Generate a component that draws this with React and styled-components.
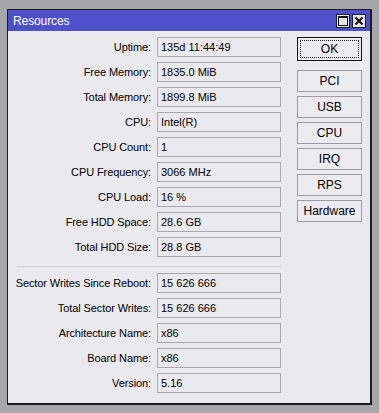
import React from "react";
import styled, { createGlobalStyle } from "styled-components";

const Global = createGlobalStyle`
  html, body { margin: 0; padding: 0; background: #a7a6ab; }
  body { font-family: "Liberation Sans", Arial, sans-serif; font-size: 11px; color: #000; }
`;

const Page = styled.div`
  padding: 9px 0 0 7px;
`;

const Window = styled.div`
  width: 365px;
  box-sizing: border-box;
  border: 1px solid #1c1c1c;
  border-right-width: 2px;
  border-bottom-width: 2px;
  background: #eae9ee;
`;

const TitleBar = styled.div`
  height: 21px;
  background: #4e50c9;
  display: flex;
  align-items: center;
  justify-content: space-between;
  padding: 0 4px 0 5px;
  color: #fff;
  font-size: 12px;
`;

const TitleText = styled.span`
  letter-spacing: -0.1px;
`;

const TitleButtons = styled.div`
  display: flex;
  gap: 2px;
`;

const TitleButton = styled.div`
  width: 14px;
  height: 14px;
  box-sizing: border-box;
  border: 1px solid #1e1e1e;
  background: #e4e3e8;
  display: flex;
  align-items: center;
  justify-content: center;
`;

const Body = styled.div`
  display: flex;
  padding: 6px 8px 10px 0;
  gap: 16px;
  align-items: flex-start;
`;

const Form = styled.div`
  display: grid;
  grid-template-columns: 143px 124px;
  column-gap: 6px;
  row-gap: 5px;
`;

const Label = styled.div`
  text-align: right;
  line-height: 20px;
  white-space: nowrap;
  letter-spacing: -0.1px;
`;

const Field = styled.div`
  height: 20px;
  box-sizing: border-box;
  border: 1px solid #a9a8ad;
  padding-left: 3px;
  line-height: 18px;
  white-space: nowrap;
  overflow: hidden;
`;

const Separator = styled.div`
  grid-column: 1 / span 2;
  height: 1px;
  margin: 4px 0 1px 9px;
  background: #cfced3;
`;

const Buttons = styled.div`
  display: flex;
  flex-direction: column;
  width: 65px;
  gap: 4px;
`;

const Button = styled.div`
  height: ${(p) => (p.$default ? 24 : 22)}px;
  box-sizing: border-box;
  border: 1px solid ${(p) => (p.$default ? "#111" : "#9d9ca1")};
  background: #ecebf0;
  display: flex;
  align-items: center;
  justify-content: center;
  margin-bottom: ${(p) => (p.$default ? 5 : 0)}px;
  font-size: 12px;
  padding: ${(p) => (p.$default ? "2px" : "0")};
`;

const Focus = styled.div`
  flex: 1;
  align-self: stretch;
  border: 1px dotted #222;
  display: flex;
  align-items: center;
  justify-content: center;
`;

const rows1 = [
  ["Uptime:", "135d 11:44:49"],
  ["Free Memory:", "1835.0 MiB"],
  ["Total Memory:", "1899.8 MiB"],
  ["CPU:", "Intel(R)"],
  ["CPU Count:", "1"],
  ["CPU Frequency:", "3066 MHz"],
  ["CPU Load:", "16 %"],
  ["Free HDD Space:", "28.6 GB"],
  ["Total HDD Size:", "28.8 GB"],
];

const rows2 = [
  ["Sector Writes Since Reboot:", "15 626 666"],
  ["Total Sector Writes:", "15 626 666"],
  ["Architecture Name:", "x86"],
  ["Board Name:", "x86"],
  ["Version:", "5.16"],
];

const renderRows = (rows) =>
  rows.map(([l, v]) => (
    <React.Fragment key={l}>
      <Label>{l}</Label>
      <Field>{v}</Field>
    </React.Fragment>
  ));

export default function App() {
  return (
    <>
      <Global />
      <Page>
        <Window>
          <TitleBar>
            <TitleText>Resources</TitleText>
            <TitleButtons>
              <TitleButton>
                <svg width="10" height="10" viewBox="0 0 10 10">
                  <rect x="0.5" y="0.5" width="9" height="9" fill="none" stroke="#111" />
                  <rect x="0" y="0" width="10" height="2" fill="#111" />
                </svg>
              </TitleButton>
              <TitleButton>
                <svg width="8" height="8" viewBox="0 0 8 8">
                  <path d="M0.5 0.5 L7.5 7.5 M7.5 0.5 L0.5 7.5" stroke="#111" strokeWidth="2" />
                </svg>
              </TitleButton>
            </TitleButtons>
          </TitleBar>
          <Body>
            <Form>
              {renderRows(rows1)}
              <Separator />
              {renderRows(rows2)}
            </Form>
            <Buttons>
              <Button $default>
                <Focus>OK</Focus>
              </Button>
              {["PCI", "USB", "CPU", "IRQ", "RPS", "Hardware"].map((b) => (
                <Button key={b}>{b}</Button>
              ))}
            </Buttons>
          </Body>
        </Window>
      </Page>
    </>
  );
}
